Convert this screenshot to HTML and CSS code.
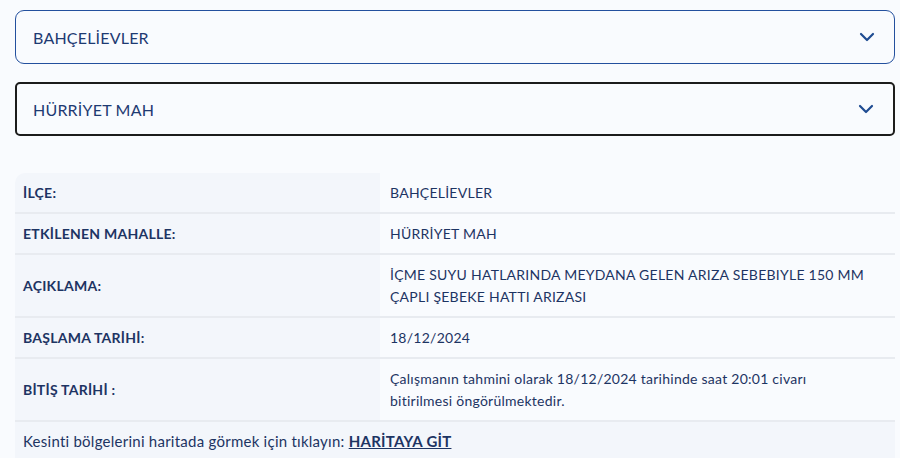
FILE: index.html
```html
<!DOCTYPE html>
<html lang="tr">
<head>
    <meta charset="UTF-8">
    <meta name="viewport" content="width=device-width, initial-scale=1.0">
    <title>Arıza Bilgisi</title>
    <link rel="stylesheet" href="styles.css">
</head>
<body>

    <div class="container">
        <div class="select select-district">
            <span>BAHÇELİEVLER</span>
            <svg class="chevron" width="16" height="10" viewBox="0 0 16 10"><path d="M2 2l6 6 6-6" fill="none" stroke="currentColor" stroke-width="2.2" stroke-linecap="round" stroke-linejoin="round"/></svg>
        </div>

        <div class="select select-hood">
            <span>HÜRRİYET MAH</span>
            <svg class="chevron" width="16" height="10" viewBox="0 0 16 10"><path d="M2 2l6 6 6-6" fill="none" stroke="currentColor" stroke-width="2.2" stroke-linecap="round" stroke-linejoin="round"/></svg>
        </div>

        <div class="info">
            <div class="row">
                <div class="label">İLÇE:</div>
                <div class="value">BAHÇELİEVLER</div>
            </div>
            <div class="row">
                <div class="label">ETKİLENEN MAHALLE:</div>
                <div class="value">HÜRRİYET MAH</div>
            </div>
            <div class="row">
                <div class="label">AÇIKLAMA:</div>
                <div class="value">İÇME SUYU HATLARINDA MEYDANA GELEN ARIZA SEBEBIYLE 150 MM ÇAPLI ŞEBEKE HATTI ARIZASI</div>
            </div>
            <div class="row">
                <div class="label">BAŞLAMA TARİHİ:</div>
                <div class="value">18/12/2024</div>
            </div>
            <div class="row">
                <div class="label">BİTİŞ TARİHİ :</div>
                <div class="value">Çalışmanın tahmini olarak 18/12/2024 tarihinde saat 20:01 civarı bitirilmesi öngörülmektedir.</div>
            </div>
            <div class="map-link">
                Kesinti bölgelerini haritada görmek için tıklayın: <a href="#">HARİTAYA GİT</a>
            </div>
        </div>
    </div>

</body>
</html>
```

FILE: styles.css
```css
body {
    font-family: Lato, "Noto Sans", sans-serif;
    background-color: #f9fbfe;
    color: #1d3463;
    margin: 0;
}

.container {
    padding: 10px 5px 0 15px;
}

.select {
    display: flex;
    align-items: center;
    justify-content: space-between;
    height: 54px;
    box-sizing: border-box;
    padding: 0 19px 0 17px;
    font-size: 16px;
    letter-spacing: 0.2px;
    color: #1e3a72;
    background-color: #f9fbfe;
}

.select-district {
    border: 1px solid #23509e;
    border-radius: 9px;
    margin-bottom: 18px;
}

.select-hood {
    border: 2px solid #1c1c1c;
    border-radius: 5px;
    padding-left: 16px;
    margin-bottom: 37px;
}

.chevron {
    color: #1f4c92;
}

.info {
    background-color: #f3f6fb;
    border-radius: 10px 0 0 0;
    overflow: hidden;
    font-size: 14px;
    letter-spacing: 0.25px;
}

.row {
    display: flex;
    border-bottom: 2px solid #e8ebf0;
}

.label {
    width: 365px;
    flex-shrink: 0;
    padding: 0 8px;
    box-sizing: border-box;
    font-weight: bold;
    display: flex;
    align-items: center;
    color: #1d3463;
}

.value {
    flex: 1;
    background-color: #f9fbfe;
    padding: 9px 27px 8px 10px;
    line-height: 22px;
    color: #1d3463;
}

.map-link {
    padding: 9px 8px 8px;
    font-size: 15px;
    line-height: 20px;
}

.map-link a {
    color: #1d3463;
    font-weight: bold;
    text-decoration: underline;
}
```
